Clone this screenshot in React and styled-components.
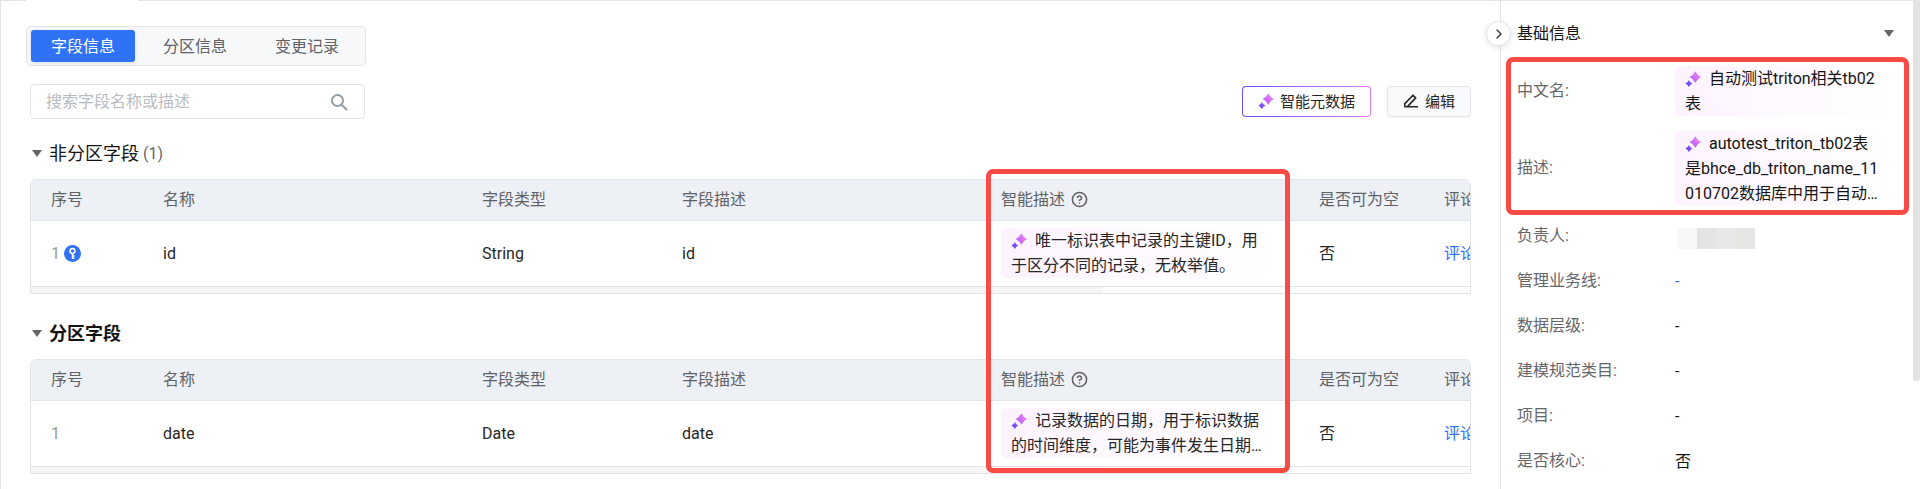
import React from 'react'
import styled, { createGlobalStyle } from 'styled-components'
import { CircleHelp, ChevronRight } from 'lucide-react'

const GlobalStyle = createGlobalStyle`
  * {
    box-sizing: border-box;
  }
  body {
    margin: 0;
    background: #fff;
    color: #262626;
    font-family: Roboto, 'Noto Sans CJK SC', sans-serif;
    font-size: 16px;
    line-height: 25px;
  }
  button, input {
    font-family: inherit;
  }
`

const Page = styled.div`
  display: flex;
  min-height: 100vh;
`

const Content = styled.div`
  flex: 1;
  min-width: 0;
  display: flex;
  flex-direction: column;
  border-left: 1px solid #e1e4eb;
`

const TopLine = styled.div`
  display: grid;
  grid-template-columns: 25px 1fr;
  column-gap: 112px;
  height: 1px;
`

const LinePart = styled.span`
  background: #e1e4eb;
`

const Columns = styled.div`
  flex: 1;
  display: flex;
`

const ScrollTrack = styled.div`
  width: 7px;
`

const ScrollThumb = styled.div`
  height: 78vh;
  border-radius: 0 0 3px 3px;
  background: #e2e2e2;
`

const Main = styled.main`
  flex: 1;
  min-width: 0;
  padding: 25px 29px 0 25px;
`

const Tabs = styled.div`
  display: inline-flex;
  gap: 8px;
  height: 40px;
  padding: 3px 6px 3px 4px;
  border: 1px solid #e1e4e9;
  border-radius: 5px;
  background: #f7f8fa;
`

const Tab = styled.button`
  padding: 0 20px 2px;
  border: none;
  border-radius: 3px;
  background: ${(props) => (props.$active ? '#3072f6' : 'transparent')};
  box-shadow: ${(props) =>
    props.$active ? '0 1px 4px rgba(0, 0, 0, 0.12)' : 'none'};
  color: ${(props) => (props.$active ? '#fff' : '#606266')};
  font-size: 16px;
  cursor: pointer;
`

const Body = styled.div`
  position: relative;
  padding: 18px 0 0 4px;
`

const Toolbar = styled.div`
  display: flex;
  align-items: center;
  justify-content: space-between;
  margin-bottom: 10px;
`

const SearchBox = styled.label`
  display: flex;
  align-items: center;
  width: 335px;
  height: 35px;
  padding: 0 16px 0 15px;
  border: 1px solid #e1e4e9;
  border-radius: 4px;
  color: #949ca6;
`

const SearchInput = styled.input`
  flex: 1;
  min-width: 0;
  padding: 0;
  border: none;
  outline: none;
  background: transparent;
  font-size: 16px;
  &::placeholder {
    color: #b8bbc0;
  }
`

const Actions = styled.div`
  display: flex;
  gap: 16px;
`

const ActionButton = styled.button`
  display: flex;
  align-items: center;
  gap: 6px;
  height: 31px;
  padding: 0 15px 2px;
  border: 1px solid ${(props) => (props.$smart ? 'transparent' : '#e1e4e9')};
  border-radius: 4px;
  background: ${(props) =>
    props.$smart
      ? 'linear-gradient(#fff, #fff) padding-box, linear-gradient(90deg, #6e4bf5, #e07bfa) border-box'
      : '#f9fafc'};
  box-shadow: ${(props) =>
    props.$smart ? 'none' : '0 1px 2px rgba(0, 0, 0, 0.05)'};
  color: #262626;
  font-size: 15px;
  cursor: pointer;
`

const Sections = styled.div`
  display: flex;
  flex-direction: column;
  gap: 15px;
`

const SectionTitle = styled.h2`
  display: flex;
  align-items: center;
  gap: 7px;
  height: 50px;
  margin: 0;
  padding: 0 0 2px 2px;
  color: #141414;
  font-size: 18px;
  font-weight: ${(props) => (props.$bold ? 700 : 400)};
`

const Count = styled.span`
  margin-left: -3px;
  color: #666;
  font-size: 16px;
  font-weight: 400;
`

const Caret = styled.span`
  border: 5px solid transparent;
  border-top: 7px solid #666;
  border-bottom: none;
`

const TableWrap = styled.div`
  overflow: hidden;
  border: 1px solid #e1e4e9;
  border-radius: 6px 6px 0 0;
`

const Table = styled.table`
  width: 134%;
  table-layout: fixed;
  border-collapse: separate;
  border-spacing: 0;
`

const Th = styled.th`
  width: ${(props) => props.$width || 'auto'};
  height: 41px;
  padding: 0 20px 2px;
  border-bottom: 1px solid #e1e4e9;
  background: #edf0f5;
  color: #606266;
  font-weight: 400;
  text-align: left;
`

const HeadLabel = styled.span`
  display: flex;
  align-items: center;
  gap: 6px;
`

const Td = styled.td`
  height: 66px;
  padding: 0 20px 1px;
  border-bottom: 1px solid #e1e4e9;
  color: ${(props) => (props.$muted ? '#999' : '#262626')};
`

const IndexCell = styled.span`
  display: flex;
  align-items: center;
  gap: 4px;
`

const HScroll = styled.div`
  height: 6px;
`

const HThumb = styled.div`
  width: 74.5%;
  height: 100%;
  background: #f6f6f6;
`

const Link = styled.a`
  color: #3072f6;
  text-decoration: none;
`

const SmartText = styled.div`
  padding: 0 ${(props) => (props.$side ? '13px' : '10px')} 0 10px;
  border-radius: 5px;
  background: linear-gradient(90deg, #fdf3ff, #fff);
  word-break: break-all;
  svg {
    margin-right: 8px;
    vertical-align: -3px;
  }
`

const Side = styled.aside`
  position: relative;
  width: 413px;
  padding: 7px 19px 0 16px;
  border-left: 1px solid #e1e4eb;
`

const Collapse = styled.button`
  position: absolute;
  top: 20px;
  left: -15px;
  display: grid;
  place-items: center;
  width: 25px;
  height: 25px;
  padding: 0;
  border: 1px solid #e1e4eb;
  border-radius: 50%;
  background: #fff;
  box-shadow: 0 2px 6px rgba(0, 0, 0, 0.1);
  color: #333;
  cursor: pointer;
`

const SideTitle = styled.h3`
  display: flex;
  align-items: center;
  justify-content: space-between;
  height: 50px;
  margin: 0;
  color: #141414;
  font-size: 16px;
  font-weight: 400;
`

const InfoList = styled.dl`
  position: relative;
  margin: 0;
`

const InfoRow = styled.div`
  display: grid;
  grid-template-columns: 158px 1fr;
  align-items: center;
  min-height: 45px;
  padding: 8px 0 7px;
`

const InfoLabel = styled.dt`
  padding-bottom: 2px;
  color: #666;
`

const InfoValue = styled.dd`
  margin: 0;
  color: #141414;
`

const Masked = styled.div`
  width: 80px;
  height: 21px;
  margin-top: 4px;
  background: linear-gradient(
    90deg,
    #fff 0 2px,
    #f8f8f7 2px 22px,
    #e4e4e4 22px 41px,
    #e8e8e8 41px 61px,
    #e6e6e5 61px
  );
`

const Mark = styled.div`
  position: absolute;
  border: 5px solid #fa4b46;
  border-radius: 7px;
  pointer-events: none;
`

const TableMark = styled(Mark)`
  top: 103px;
  left: 960px;
  width: 304px;
  bottom: 1px;
`

const SideMark = styled(Mark)`
  top: -1px;
  right: -15px;
  bottom: -2px;
  left: -11px;
`

const SmartIcon = ({ id }) => (
  <svg width='16' height='16' viewBox='0 0 16 16' aria-hidden='true'>
    <defs>
      <linearGradient id={id} x1='0' y1='16' x2='15' y2='2' gradientUnits='userSpaceOnUse'>
        <stop offset='0.15' stopColor='#6047fa' />
        <stop offset='0.55' stopColor='#c565f8' />
        <stop offset='1' stopColor='#f285f7' />
      </linearGradient>
    </defs>
    <path
      fill={`url(#${id})`}
      d='M10.3 0.2Q12.1 4.2 16 6Q12.1 7.8 10.3 11.8Q8.5 7.8 4.6 6Q8.5 4.2 10.3 0.2ZM3.9 9Q5 11.6 7.5 12.6Q5 13.7 3.9 16Q2.8 13.7 0.4 12.6Q2.8 11.6 3.9 9Z'
    />
  </svg>
)

const SearchIcon = () => (
  <svg width='18' height='18' viewBox='0 0 18 18' fill='none' aria-hidden='true'>
    <circle cx='7.5' cy='7.5' r='5.5' stroke='currentColor' strokeWidth='2' />
    <path d='M11.5 11.5L17 17' stroke='currentColor' strokeWidth='2.2' />
  </svg>
)

const EditIcon = () => (
  <svg width='16' height='16' viewBox='0 0 16 16' fill='none' aria-hidden='true'>
    <path
      d='M1.8 13.6V10.6L10 2.2L12.7 4.9L4.4 13.6M1.2 13.7H15'
      stroke='#262626'
      strokeWidth='1.6'
      strokeLinejoin='round'
    />
  </svg>
)

const KeyIcon = () => (
  <svg width='17' height='17' viewBox='0 0 17 17' fill='none' aria-hidden='true'>
    <circle cx='8.5' cy='8.5' r='8.5' fill='#3072f6' />
    <circle cx='8.5' cy='6' r='2.4' stroke='#fff' strokeWidth='1.5' />
    <path d='M8.5 8.4V14M8.5 11H10.6M8.5 13.3H10.4' stroke='#fff' strokeWidth='1.4' />
  </svg>
)

const groups = [
  {
    title: '非分区字段',
    count: 1,
    row: {
      name: 'id',
      type: 'String',
      desc: 'id',
      isKey: true,
      smart: '唯一标识表中记录的主键ID，用于区分不同的记录，无枚举值。',
    },
  },
  {
    title: '分区字段',
    row: {
      name: 'date',
      type: 'Date',
      desc: 'date',
      smart: '记录数据的日期，用于标识数据的时间维度，可能为事件发生日期…',
    },
  },
]

const smartInfos = [
  { label: '中文名:', value: '自动测试triton相关tb02表' },
  {
    label: '描述:',
    value: 'autotest_triton_tb02表是bhce_db_triton_name_11010702数据库中用于自动…',
  },
]

const infos = [
  { label: '负责人:', value: <Masked /> },
  { label: '管理业务线:', value: <Link href='#line'>-</Link> },
  { label: '数据层级:', value: '-' },
  { label: '建模规范类目:', value: '-' },
  { label: '项目:', value: '-' },
  { label: '是否核心:', value: '否' },
]

const FieldTable = ({ row }) => (
  <TableWrap>
    <Table>
      <thead>
        <tr>
          <Th $width='112px'>序号</Th>
          <Th $width='319px'>名称</Th>
          <Th $width='200px'>字段类型</Th>
          <Th $width='319px'>字段描述</Th>
          <Th $width='318px'>
            <HeadLabel>
              智能描述 <CircleHelp size={17} strokeWidth={2.2} />
            </HeadLabel>
          </Th>
          <Th $width='125px'>是否可为空</Th>
          <Th>评论</Th>
        </tr>
      </thead>
      <tbody>
        <tr>
          <Td $muted>
            <IndexCell>1 {row.isKey && <KeyIcon />}</IndexCell>
          </Td>
          <Td>{row.name}</Td>
          <Td>{row.type}</Td>
          <Td>{row.desc}</Td>
          <Td>
            <SmartText>
              <SmartIcon id={`smart-${row.name}`} />
              {row.smart}
            </SmartText>
          </Td>
          <Td>否</Td>
          <Td>
            <Link href='#comment'>评论</Link>
          </Td>
        </tr>
      </tbody>
    </Table>
    <HScroll>
      <HThumb />
    </HScroll>
  </TableWrap>
)

const App = () => {
  return (
    <Page>
      <GlobalStyle />
      <Content>
        <TopLine>
          <LinePart />
          <LinePart />
        </TopLine>
        <Columns>
          <Main>
            <Tabs>
              <Tab $active>字段信息</Tab>
              <Tab>分区信息</Tab>
              <Tab>变更记录</Tab>
            </Tabs>
            <Body>
              <Toolbar>
                <SearchBox>
                  <SearchInput
                    type='text'
                    aria-label='搜索字段名称或描述'
                    placeholder='搜索字段名称或描述'
                  />
                  <SearchIcon />
                </SearchBox>
                <Actions>
                  <ActionButton $smart>
                    <SmartIcon id='smart-button' />
                    智能元数据
                  </ActionButton>
                  <ActionButton>
                    <EditIcon />
                    编辑
                  </ActionButton>
                </Actions>
              </Toolbar>
              <Sections>
                {groups.map((group) => (
                  <section key={group.title}>
                    <SectionTitle $bold={!group.count}>
                      <Caret />
                      {group.title}
                      {group.count && <Count>({group.count})</Count>}
                    </SectionTitle>
                    <FieldTable row={group.row} />
                  </section>
                ))}
              </Sections>
              <TableMark />
            </Body>
          </Main>
          <Side>
            <Collapse aria-label='收起'>
              <ChevronRight size={16} />
            </Collapse>
            <SideTitle>
              基础信息
              <Caret />
            </SideTitle>
            <InfoList>
              {smartInfos.map((info) => (
                <InfoRow key={info.label}>
                  <InfoLabel>{info.label}</InfoLabel>
                  <InfoValue>
                    <SmartText $side>
                      <SmartIcon id={`info-${info.value.length}`} />
                      {info.value}
                    </SmartText>
                  </InfoValue>
                </InfoRow>
              ))}
              <SideMark />
            </InfoList>
            <InfoList>
              {infos.map((info) => (
                <InfoRow key={info.label}>
                  <InfoLabel>{info.label}</InfoLabel>
                  <InfoValue>{info.value}</InfoValue>
                </InfoRow>
              ))}
            </InfoList>
          </Side>
        </Columns>
      </Content>
      <ScrollTrack>
        <ScrollThumb />
      </ScrollTrack>
    </Page>
  )
}

export default App
